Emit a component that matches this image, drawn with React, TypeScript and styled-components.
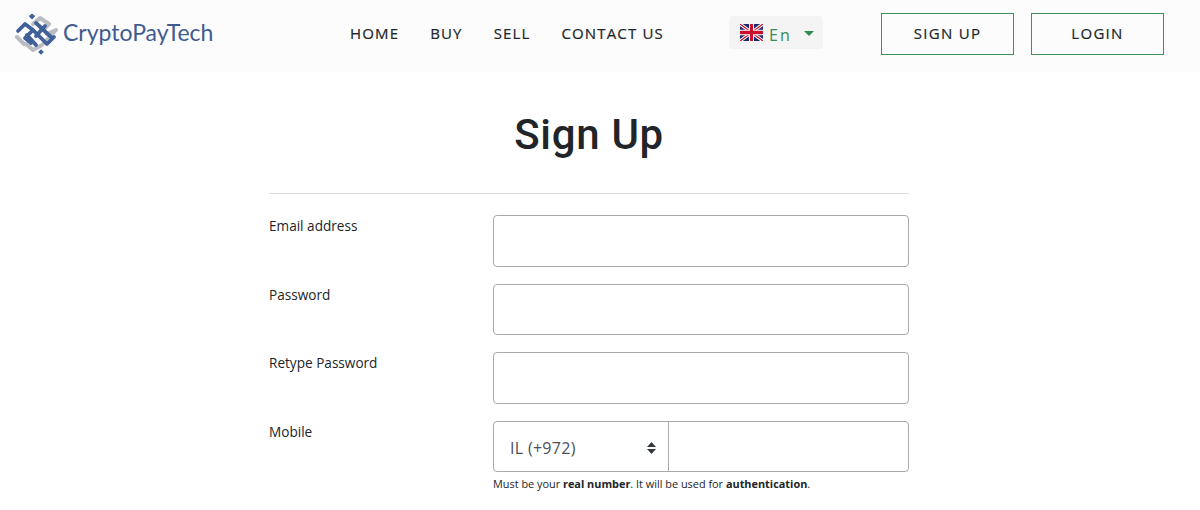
import React from "react";
import styled, { createGlobalStyle } from "styled-components";

const GlobalStyle = createGlobalStyle`
  html, body {
    margin: 0;
    padding: 0;
    background: #fff;
    overflow: hidden;
  }
`;

const Header = styled.header`
  height: 72px;
  background: #fcfcfc;
  display: flex;
  align-items: center;
  font-family: "Open Sans", sans-serif;
`;

const Logo = styled.div`
  width: 316px;
  padding-left: 15px;
  box-sizing: border-box;
  display: flex;
  align-items: center;
  gap: 4px;
  margin-top: -2px;
`;

const LogoText = styled.span`
  font-family: "Lato", sans-serif;
  font-size: 23px;
  color: #3f5b90;
  margin-top: -6px;
`;

const Nav = styled.nav`
  width: 378px;
  display: flex;
  gap: 31px;
  padding-left: 34px;
  box-sizing: border-box;
  margin-top: -6px;
`;

const NavLink = styled.a`
  font-size: 15px;
  font-weight: 500;
  letter-spacing: 1.15px;
  color: #212529;
  -webkit-text-stroke: 0.2px #212529;
`;

const Lang = styled.div`
  margin-left: 35px;
  width: 94px;
  height: 33px;
  margin-top: -7px;
  background: #f4f4f4;
  border-radius: 4px;
  display: flex;
  align-items: center;
  padding-left: 11px;
  box-sizing: border-box;
  font-size: 16px;
  letter-spacing: 2px;
  color: #3b8a52;
`;

const LangLabel = styled.span`
  margin-left: 6px;
  margin-top: 4px;
`;

const Caret = styled.span`
  margin-left: 12px;
  margin-top: 1px;
  border-top: 5px solid #2e8b4a;
  border-left: 5px solid transparent;
  border-right: 5px solid transparent;
`;

const AuthButtons = styled.div`
  margin-left: 58px;
  display: flex;
  gap: 17px;
  margin-top: -4px;
`;

const AuthButton = styled.button`
  width: 133px;
  height: 42px;
  padding: 0 0 2px;
  background: transparent;
  border: 1px solid #3f9158;
  border-radius: 0;
  font-family: "Open Sans", sans-serif;
  font-size: 15px;
  font-weight: 500;
  letter-spacing: 1.3px;
  color: #212529;
  -webkit-text-stroke: 0.2px #212529;
`;

const Main = styled.main`
  width: 640px;
  margin: 0 auto;
  position: relative;
  left: -11px;
  font-family: "Open Sans", sans-serif;
`;

const Title = styled.h1`
  margin: 0;
  padding-top: 38px;
  height: 83px;
  text-align: center;
  font-family: "Roboto", sans-serif;
  font-size: 42px;
  font-weight: 500;
  line-height: 50px;
  letter-spacing: 0.7px;
  color: #212529;
`;

const Divider = styled.hr`
  margin: 0 0 21px;
  border: 0;
  border-top: 1px solid #dedede;
`;

const Row = styled.div`
  display: grid;
  grid-template-columns: 224px 416px;
  margin-bottom: 17px;
`;

const Label = styled.label`
  font-size: 13.6px;
  line-height: 22px;
  color: #212529;
`;

const Input = styled.input`
  display: block;
  height: 51.5px;
  width: 100%;
  box-sizing: border-box;
  border: 1px solid #a9a9a9;
  border-radius: 4px;
  background: #fff;
`;

const PhoneGroup = styled.div`
  display: flex;
  height: 51.5px;
  border: 1px solid #a9a9a9;
  border-radius: 4px;
  box-sizing: border-box;
`;

const CountrySelect = styled.div`
  width: 175px;
  box-sizing: border-box;
  border-right: 1px solid #a9a9a9;
  display: flex;
  align-items: center;
  justify-content: space-between;
  padding: 4px 12px 0 16px;
  font-size: 16px;
  letter-spacing: 0.3px;
  color: #495057;
`;

const PhoneInput = styled.input`
  flex: 1;
  min-width: 0;
  border: 0;
  background: transparent;
`;

const Hint = styled.p`
  margin: 4px 0 0;
  font-size: 10.9px;
  line-height: 15px;
  color: #212529;
`;

const Mark = () => (
  <svg width="44" height="42" viewBox="15 15 44 42" fill="none" strokeLinejoin="round" strokeLinecap="round">
    <g stroke="#b9bcc2" strokeWidth="4">
      <path d="M33 25 L40 19 L49 25 L43 31" />
      <path d="M47 35 L56 31 L44 44" />
      <path d="M26 45 L33 51 L42 46" />
      <path d="M17 38 L24 45" />
    </g>
    <g stroke="#41609a" strokeWidth="3.8">
      <path d="M18 32 L25 25 L33 31 L25 39 L31 44" />
      <path d="M33 31 L47 45 L54 38" />
      <path d="M27 36 L36 46" />
      <path d="M45 27 L36 37" />
      <path d="M36 24 L51 38" />
    </g>
    <rect x="30" y="15" width="4.5" height="4.5" fill="#41609a" transform="rotate(45 32 17)" />
    <rect x="39" y="51" width="4" height="4" fill="#41609a" transform="rotate(45 41 53)" />
  </svg>
);

const UkFlag = () => (
  <svg width="23" height="17" viewBox="0 0 60 40" preserveAspectRatio="none">
    <rect width="60" height="40" fill="#1f2a6b" />
    <path d="M0 0 L60 40 M60 0 L0 40" stroke="#fff" strokeWidth="8" />
    <path d="M0 0 L60 40 M60 0 L0 40" stroke="#c8102e" strokeWidth="3" />
    <path d="M30 0 V40 M0 20 H60" stroke="#fff" strokeWidth="13" />
    <path d="M30 0 V40 M0 20 H60" stroke="#c8102e" strokeWidth="8" />
  </svg>
);

const SortArrows = () => (
  <svg width="9" height="12" viewBox="0 0 9 12" fill="#343a40">
    <path d="M4.5 0 L9 5 H0 Z" />
    <path d="M0 7 H9 L4.5 12 Z" />
  </svg>
);

const App: React.FC = () => {
  return (
    <>
      <GlobalStyle />
      <Header>
        <Logo>
          <Mark />
          <LogoText>CryptoPayTech</LogoText>
        </Logo>
        <Nav>
          <NavLink>HOME</NavLink>
          <NavLink>BUY</NavLink>
          <NavLink>SELL</NavLink>
          <NavLink>CONTACT US</NavLink>
        </Nav>
        <Lang>
          <UkFlag />
          <LangLabel>En</LangLabel>
          <Caret />
        </Lang>
        <AuthButtons>
          <AuthButton>SIGN UP</AuthButton>
          <AuthButton>LOGIN</AuthButton>
        </AuthButtons>
      </Header>
      <Main>
        <Title>Sign Up</Title>
        <Divider />
        <Row>
          <Label>Email address</Label>
          <Input />
        </Row>
        <Row>
          <Label>Password</Label>
          <Input />
        </Row>
        <Row>
          <Label>Retype Password</Label>
          <Input />
        </Row>
        <Row>
          <Label>Mobile</Label>
          <div>
            <PhoneGroup>
              <CountrySelect>
                IL (+972)
                <SortArrows />
              </CountrySelect>
              <PhoneInput />
            </PhoneGroup>
            <Hint>
              Must be your <b>real number</b>. It will be used for <b>authentication</b>.
            </Hint>
          </div>
        </Row>
      </Main>
    </>
  );
};

export default App;
